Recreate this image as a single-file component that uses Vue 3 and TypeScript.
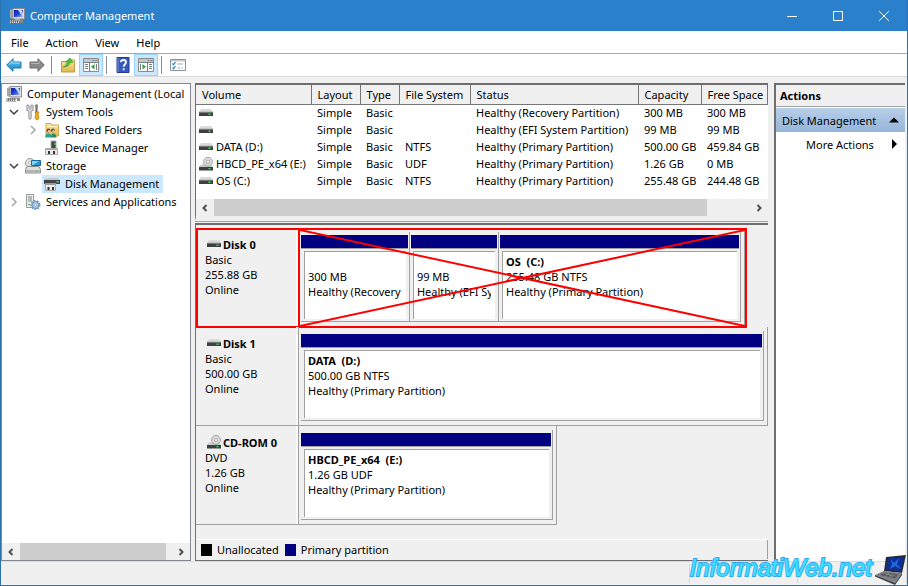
<script setup lang="ts">
type IconName = 'computer' | 'tools' | 'shared' | 'device' | 'storage' | 'disk' | 'services'

interface TreeItem {
  label: string
  icon: IconName
  depth: number
  state?: 'open' | 'closed'
  selected?: boolean
}

interface Volume {
  name: string
  cd?: boolean
  fs: string
  status: string
  capacity: string
  free: string
}

interface Partition {
  title: string
  size: string
  status: string
  weight: number
}

interface Disk {
  name: string
  kind: string
  size: string
  cd?: boolean
  marked?: boolean
  width: number
  partitions: Partition[]
}

const menus: string[] = ['File', 'Action', 'View', 'Help']

const tree: TreeItem[] = [
  { label: 'Computer Management (Local', icon: 'computer', depth: 0 },
  { label: 'System Tools', icon: 'tools', depth: 1, state: 'open' },
  { label: 'Shared Folders', icon: 'shared', depth: 2, state: 'closed' },
  { label: 'Device Manager', icon: 'device', depth: 2 },
  { label: 'Storage', icon: 'storage', depth: 1, state: 'open' },
  { label: 'Disk Management', icon: 'disk', depth: 2, selected: true },
  { label: 'Services and Applications', icon: 'services', depth: 1, state: 'closed' },
]

const columns: string[] = ['Volume', 'Layout', 'Type', 'File System', 'Status', 'Capacity', 'Free Space']

const volumes: Volume[] = [
  { name: '', fs: '', status: 'Healthy (Recovery Partition)', capacity: '300 MB', free: '300 MB' },
  { name: '', fs: '', status: 'Healthy (EFI System Partition)', capacity: '99 MB', free: '99 MB' },
  { name: 'DATA (D:)', fs: 'NTFS', status: 'Healthy (Primary Partition)', capacity: '500.00 GB', free: '459.84 GB' },
  { name: 'HBCD_PE_x64 (E:)', cd: true, fs: 'UDF', status: 'Healthy (Primary Partition)', capacity: '1.26 GB', free: '0 MB' },
  { name: 'OS (C:)', fs: 'NTFS', status: 'Healthy (Primary Partition)', capacity: '255.48 GB', free: '244.48 GB' },
]

const disks: Disk[] = [
  {
    name: 'Disk 0', kind: 'Basic', size: '255.88 GB', marked: true, width: 95,
    partitions: [
      { title: '', size: '300 MB', status: 'Healthy (Recovery Partition)', weight: 109 },
      { title: '', size: '99 MB', status: 'Healthy (EFI System Partition)', weight: 89 },
      { title: 'OS  (C:)', size: '255.48 GB NTFS', status: 'Healthy (Primary Partition)', weight: 243 },
    ],
  },
  {
    name: 'Disk 1', kind: 'Basic', size: '500.00 GB', width: 100,
    partitions: [{ title: 'DATA  (D:)', size: '500.00 GB NTFS', status: 'Healthy (Primary Partition)', weight: 1 }],
  },
  {
    name: 'CD-ROM 0', kind: 'DVD', size: '1.26 GB', cd: true, width: 55,
    partitions: [{ title: 'HBCD_PE_x64  (E:)', size: '1.26 GB UDF', status: 'Healthy (Primary Partition)', weight: 1 }],
  },
]
</script>

<template>
  <div class="window">
    <svg class="defs" aria-hidden="true">
      <linearGradient id="screen" x1="0" y1="0" x2="1" y2="1">
        <stop offset="0" stop-color="#0a1fa8" /><stop offset="0.5" stop-color="#2440d8" /><stop offset="1" stop-color="#9fb8f4" />
      </linearGradient>
      <linearGradient id="blueArrow" x1="0" y1="0" x2="0" y2="1">
        <stop offset="0" stop-color="#6cc8f0" /><stop offset="1" stop-color="#1484c8" />
      </linearGradient>
      <linearGradient id="folder" x1="0" y1="0" x2="0" y2="1">
        <stop offset="0" stop-color="#fbe9a8" /><stop offset="1" stop-color="#e3b44c" />
      </linearGradient>
      <symbol id="i-computer" viewBox="0 0 16 16">
        <path d="M1 2l3-1v10l-3-1z" fill="#a8a8a8" /><path d="M4 .500h11.500V11H4z" fill="#e4e4e4" stroke="#8c8c8c" />
        <path d="M5 2h9v7H5z" fill="url(#screen)" />
        <path d="M9 2h3.500L14 6v3z" fill="#c9d8fa" />
        <path d="M6 11h5v2H6z" fill="#b5b5b5" /><path d="M1 12h9v3.500H0z" fill="#777" />
        <path d="M1 13h9M1 14.500h9" stroke="#ddd" stroke-dasharray="1 1" /><path d="M11 12h3v3h-3z" fill="#888" />
      </symbol>
      <symbol id="i-tools" viewBox="0 0 16 16">
        <path d="M3 2v3.500l2 1 2-1V2M5 6.500V14" fill="none" stroke="#777" stroke-width="3" stroke-linecap="round" />
        <path d="M3 2v3.500l2 1 2-1V2M5 6.500V14" fill="none" stroke="#e6e6e6" stroke-width="1.400" stroke-linecap="round" />
        <path d="M11.500 1v7" stroke="#666" stroke-width="2" /><path d="M10 1l1.500-1L13 1v2h-3z" fill="#888" />
        <path d="M10 8h4l-1 2 1 4.500-2 1.500-2-1.500.7-4.500z" fill="#f0ae18" stroke="#b87908" stroke-width=".7" />
      </symbol>
      <symbol id="i-shared" viewBox="0 0 16 16">
        <path d="M2 1.500h5l1 1.500h6.500v11H2z" fill="url(#folder)" stroke="#d3a94c" />
        <path d="M3 4.500h11" stroke="#fff2bd" />
        <circle cx="4.500" cy="8.500" r="1.900" fill="#5c4a3b" /><circle cx="5" cy="9.300" r="1.200" fill="#f3c9a5" />
        <circle cx="9" cy="8.500" r="1.900" fill="#5c4a3b" /><circle cx="9.500" cy="9.300" r="1.200" fill="#f3c9a5" />
        <path d="M1 15.500q.500-4 3.500-4t3 4z" fill="#27a59c" /><path d="M7 15.500q0-4 2.500-4t3 4z" fill="#2b8c56" />
      </symbol>
      <symbol id="i-device" viewBox="0 0 16 16">
        <path d="M7 1h5v8H7z" fill="#444" stroke="#aaa" /><path d="M10 3h1.500v2H10z" fill="#3cce50" />
        <path d="M1.500 8.500h12v6h-12z" fill="#e9e9e9" stroke="#aaa" /><path d="M2 8h11v2H2z" fill="#aaa" />
        <path d="M4 11h2v3H4zM9 11h2v3H9z" fill="#333" />
      </symbol>
      <symbol id="i-storage" viewBox="0 0 16 16">
        <circle cx="5" cy="5" r="4.500" fill="#e2e5e7" stroke="#92999d" /><circle cx="5" cy="5" r="1.500" fill="#fff" stroke="#999" stroke-width=".6" />
        <path d="M6.500 2.500h9v5h-9z" fill="#2797cd" stroke="#176b98" /><path d="M7 3h7L8 7H7z" fill="#87d4f3" />
        <path d="M2 8.500h12l1.500 3v3.500H.5v-3.500z" fill="#dedede" stroke="#8c8c8c" /><path d="M1 12h14v2.500H1z" fill="#b5b5b5" />
        <path d="M11 12.500h2v1.300h-2z" fill="#35e24c" />
      </symbol>
      <symbol id="i-disk" viewBox="0 0 16 16">
        <path d="M2 2h12l2 2H0z" fill="#c8c8c8" /><path d="M0 4h16v4H0z" fill="#444" /><path d="M12.500 5h2v1.500h-2z" fill="#42e04f" />
        <path d="M1.500 8.500h10v6h-10z" fill="#ececec" stroke="#aaa" /><path d="M1 7h11v2H1z" fill="#9b9b9b" />
        <path d="M3.500 11h2v3h-2zM8 11h2v3H8z" fill="#333" />
      </symbol>
      <symbol id="i-services" viewBox="0 0 16 16">
        <path d="M1.500.500h7v13h-7z" fill="#ececec" stroke="#999" /><path d="M3 3h4M3 5h4M3 7h4" stroke="#7d8790" />
        <path d="M3 10h2v1H3z" fill="#45b857" />
        <circle cx="10.500" cy="11" r="4" fill="#9bbddb" stroke="#6b93b9" stroke-width="2" stroke-dasharray="1.600 1.200" />
        <circle cx="10.500" cy="11" r="3.300" fill="#b9d4ea" stroke="#7399bd" /><circle cx="10.500" cy="11" r="1.300" fill="#fff" stroke="#6b93b9" stroke-width=".7" />
      </symbol>
      <symbol id="i-drive" viewBox="0 0 14 14">
        <path d="M2 3h10l2 3H0z" fill="#dadada" /><path d="M0 6h14v4H0z" fill="#3c4040" /><path d="M0 5.500h14v1H0z" fill="#b0b0b0" />
        <path d="M9.500 7.500h2v1.500h-2z" fill="#2fe645" />
      </symbol>
      <symbol id="i-cd" viewBox="0 0 14 14">
        <path d="M2 7.500h10l2 2.500H0z" fill="#c9c9c9" /><circle cx="9" cy="4.800" r="4.400" fill="#e0e0e0" stroke="#999" stroke-width=".9" />
        <circle cx="9" cy="4.800" r="1.700" fill="#fff" stroke="#999" stroke-width=".9" />
        <path d="M0 10h14v3.500H0z" fill="#3c4040" /><path d="M9.500 11h2v1.300h-2z" fill="#2fe645" />
      </symbol>
    </svg>

    <header class="titlebar">
      <svg class="icon16"><use href="#i-computer" /></svg>
      <h1>Computer Management</h1>
      <button type="button" aria-label="Minimize"><svg viewBox="0 0 12 12"><path d="M1 6.500h10" /></svg></button>
      <button type="button" aria-label="Maximize"><svg viewBox="0 0 12 12"><path d="M1.500 1.500h9v9h-9z" /></svg></button>
      <button type="button" aria-label="Close"><svg viewBox="0 0 12 12"><path d="M1 1l10 10M11 1L1 11" /></svg></button>
    </header>

    <nav class="menubar">
      <button v-for="m in menus" :key="m" type="button">{{ m }}</button>
    </nav>

    <div class="toolbar">
      <button type="button" aria-label="Back">
        <svg viewBox="0 0 16 16"><path d="M.700 8L7 1.700V5h8v6H7v3.300z" fill="url(#blueArrow)" stroke="#1a78ae" /><path d="M3 7.500L6 4.500V6h8" fill="none" stroke="#a8e2fa" /></svg>
      </button>
      <button type="button" aria-label="Forward">
        <svg viewBox="0 0 16 16"><path d="M15.300 8L9 1.700V5H1v6h8v3.300z" fill="#8a8a8a" stroke="#6a6a6a" /><path d="M2 6.500h8v-2" fill="none" stroke="#b5b5b5" /></svg>
      </button>
      <i class="sep"></i>
      <button type="button" aria-label="Up one level">
        <svg viewBox="0 0 16 16"><path d="M1.500 4.500h5L8 3h6.500v12h-13z" fill="url(#folder)" stroke="#c09a48" /><path d="M3 10q3 0 4.500-5L5.500 5 10 1l3 4.500-2.500-.3Q9 10 3 10z" fill="#4cc33c" stroke="#2c8e25" stroke-width=".6" /></svg>
      </button>
      <button type="button" class="on" aria-label="Show or hide console tree">
        <svg viewBox="0 0 16 16"><path d="M.500 1.500h15v13H.500z" fill="#fff" stroke="#858b90" /><path d="M1 2h14v3H1z" fill="#c3c8cb" /><path d="M1 5.500h14M6.500 6v8M12.500 3.500h2M9.500 3.500h2" stroke="#777e84" /><path d="M2 7.500h3M2 9.500h3M2 11.500h3M13.500 7v6" stroke="#777e84" /><path d="M11.500 7v5.500L8 9.700z" fill="#28a43a" /></svg>
      </button>
      <i class="sep"></i>
      <button type="button" aria-label="Help">
        <svg viewBox="0 0 16 16"><path d="M2 .500h12v15H2z" fill="#3558bb" stroke="#1d3a91" /><path d="M3 1v14" stroke="#7c98e0" /><path d="M5.800 5.200Q6 3 8.500 3t2.500 2.300c0 2-2.300 2-2.300 4.500M8.700 11.300v2" fill="none" stroke="#fff" stroke-width="1.800" /></svg>
      </button>
      <button type="button" class="on" aria-label="Show or hide action pane">
        <svg viewBox="0 0 16 16"><path d="M.500 1.500h15v13H.500z" fill="#fff" stroke="#858b90" /><path d="M1 2h14v3H1z" fill="#c3c8cb" /><path d="M1 5.500h14M9.500 6v8M12.500 3.500h2M9.500 3.500h2" stroke="#777e84" /><path d="M11 7.500h3M11 9.500h3M11 11.500h3M2.500 7v6" stroke="#777e84" /><path d="M4.500 7v5.500L8 9.700z" fill="#28a43a" /></svg>
      </button>
      <i class="sep"></i>
      <button type="button" aria-label="Properties">
        <svg viewBox="0 0 16 16"><path d="M.500 2.500h15v11H.500z" fill="#fff" stroke="#8b9299" /><path d="M1 3h14v1.500H1z" fill="#c6ccd0" /><path d="M2.500 6.500l1 1.200L5.500 5M2.500 10.500l1 1.200L5.500 9" fill="none" stroke="#2b80cc" stroke-width="1.200" /><path d="M7.500 7H13M7.500 11H10M11.500 11H13" stroke="#9aa" /></svg>
      </button>
    </div>

    <main class="body">
      <aside class="pane tree-pane">
        <ul class="tree">
          <li v-for="t in tree" :key="t.label" :class="'depth' + t.depth">
            <button v-if="t.depth" type="button" class="toggle" :class="t.state" :aria-label="'Toggle ' + t.label" :disabled="!t.state">
              <svg v-if="t.state === 'open'" viewBox="0 0 10 10"><path d="M1 3l4 4 4-4" /></svg>
              <svg v-else-if="t.state" viewBox="0 0 10 10"><path d="M3 1l4 4-4 4" /></svg>
            </button>
            <span class="node" :class="{ selected: t.selected }">
              <svg class="icon16"><use :href="'#i-' + t.icon" /></svg>
              <span>{{ t.label }}</span>
            </span>
          </li>
        </ul>
        <div class="hscroll">
          <button type="button" aria-label="Scroll left"><svg viewBox="0 0 8 8"><path d="M5.500 1l-3 3 3 3" /></svg></button>
          <div class="track"><div class="thumb tree-thumb"></div></div>
          <button type="button" aria-label="Scroll right"><svg viewBox="0 0 8 8"><path d="M2.500 1l3 3-3 3" /></svg></button>
        </div>
      </aside>

      <section class="center">
        <div class="volumes">
          <table>
            <colgroup>
              <col class="c-volume" /><col class="c-layout" /><col class="c-type" /><col class="c-fs" />
              <col class="c-status" /><col class="c-capacity" /><col />
            </colgroup>
            <thead>
              <tr><th v-for="c in columns" :key="c" scope="col">{{ c }}</th></tr>
            </thead>
            <tbody>
              <tr v-for="(v, i) in volumes" :key="i">
                <td><div class="vol"><svg><use :href="v.cd ? '#i-cd' : '#i-drive'" /></svg>{{ v.name }}</div></td>
                <td>Simple</td>
                <td>Basic</td>
                <td>{{ v.fs }}</td>
                <td>{{ v.status }}</td>
                <td>{{ v.capacity }}</td>
                <td>{{ v.free }}</td>
              </tr>
            </tbody>
          </table>
          <div class="hscroll">
            <button type="button" aria-label="Scroll left"><svg viewBox="0 0 8 8"><path d="M5.500 1l-3 3 3 3" /></svg></button>
            <div class="track"><div class="thumb volume-thumb"></div></div>
            <button type="button" aria-label="Scroll right"><svg viewBox="0 0 8 8"><path d="M2.500 1l3 3-3 3" /></svg></button>
          </div>
        </div>

        <div class="disks">
          <article v-for="d in disks" :key="d.name" class="disk">
            <div class="label">
              <h2><svg><use :href="d.cd ? '#i-cd' : '#i-drive'" /></svg>{{ d.name }}</h2>
              <p>{{ d.kind }}</p>
              <p>{{ d.size }}</p>
              <p>Online</p>
            </div>
            <div class="area">
              <div class="graph" :style="{ width: d.width + '%' }">
                <div v-for="(p, i) in d.partitions" :key="i" class="partition" :style="{ flexGrow: p.weight }">
                  <div class="bar"></div>
                  <div class="box">
                    <h3>{{ p.title }}</h3>
                    <p>{{ p.size }}</p>
                    <p>{{ p.status }}</p>
                  </div>
                </div>
              </div>
            </div>
            <div v-if="d.marked" class="mark">
              <div class="mark-label"></div>
              <svg class="mark-cross" viewBox="0 0 100 100" preserveAspectRatio="none"><path d="M0 0L100 100M100 0L0 100" /></svg>
            </div>
          </article>
          <div class="legend">
            <i class="swatch black"></i><span>Unallocated</span>
            <i class="swatch navy"></i><span>Primary partition</span>
          </div>
        </div>
      </section>

      <aside class="pane actions">
        <h2>Actions</h2>
        <button type="button" class="group"><span>Disk Management</span><svg viewBox="0 0 10 10"><path d="M0 7.500L5 2.500l5 5z" /></svg></button>
        <button type="button" class="more"><span>More Actions</span><svg viewBox="0 0 10 10"><path d="M3 0l5 5-5 5z" /></svg></button>
      </aside>
    </main>

    <footer class="status">
      <span></span><span></span><span></span>
      <div class="brand">
        <strong>InformatiWeb.net</strong>
        <svg viewBox="0 0 32 30">
          <path d="M11 2l20-2-4 18-18-2z" fill="#252a36" /><path d="M13 3.500L29 2l-3.500 14L11 14.500z" fill="#0c2f9c" />
          <path d="M16 4l3 4 5-5-2 6 4 5-6-3-5 3 2-5z" fill="#2268d8" />
          <path d="M9 16l18 2-7 10L0 20z" fill="#7d8085" /><path d="M10 17.500l13 2-3 4L5 19.800z" fill="#505358" />
          <path d="M8 18.500l13 2.500M10 17.500l9 5M14 18l-4 3.500M18 19l-4 3.500" stroke="#92969c" stroke-width=".6" />
          <path d="M0 20l20 8v2L0 21.500zM20 28l7-10v2l-7 10z" fill="#393c40" />
        </svg>
      </div>
    </footer>
  </div>
</template>

<style>
html, body, #app { height: 100%; }
body { margin: 0; overflow: hidden; }
</style>

<style scoped>
* { box-sizing: border-box; }
.window {
  display: flex; flex-direction: column; height: 100%;
  border: solid #2b72ac; border-width: 0 1px 1px;
  background: #f0f0f0; color: #000;
  font: 11px/15px "Noto Sans", "Open Sans", sans-serif;
  white-space: nowrap;
}
.defs { position: absolute; width: 0; height: 0; }
h1, h2, h3, p, ul { margin: 0; padding: 0; font-size: inherit; font-weight: inherit; }
button { font: inherit; color: inherit; background: none; border: 0; padding: 0; }
svg { display: block; flex: none; }
.icon16 { width: 16px; height: 16px; }

.titlebar { display: flex; align-items: center; height: 31px; padding-left: 8px; background: #2a80cb; color: #fff; flex: none; }
.titlebar h1 { flex: 1; padding-left: 5px; }
.titlebar button { display: grid; place-items: center; width: 46px; height: 30px; }
.titlebar button svg { width: 12px; height: 12px; fill: none; stroke: #fff; }

.menubar { display: flex; height: 23px; padding-left: 10px; gap: 17px; background: #fff; border-bottom: 1px solid #a9a9a9; flex: none; }
.toolbar { display: flex; align-items: center; height: 23px; padding-left: 1px; background: #fff; border-bottom: 1px solid #d9d9d9; flex: none; }
.toolbar button { display: grid; place-items: center; width: 23px; height: 22px; }
.toolbar button.on { background: #cce8ff; border: 1px solid #99d1ff; width: 24px; }
.toolbar svg { width: 16px; height: 16px; }
.sep { width: 1px; height: 18px; margin: 0 4px 0 3px; background: #8d8d8d; }

.body { flex: 1; display: flex; min-height: 0; padding: 6px 2px 0 0; border-bottom: 1px solid #dcdcdc; }
.pane { background: #fff; border: 1px solid #828790; }
.tree-pane { flex: none; width: 190px; display: flex; flex-direction: column; overflow: hidden; }
.tree { flex: 1; list-style: none; padding-top: 1px; }
.tree li { display: flex; height: 18px; }
.tree .depth0 { padding-left: 2px; }
.tree .depth1 { padding-left: 3px; }
.tree .depth2 { padding-left: 22px; }
.toggle { display: grid; place-items: center; width: 18px; height: 18px; }
.toggle svg { width: 10px; height: 10px; fill: none; stroke: #a6a6a6; stroke-width: 1.5; }
.toggle.open svg { stroke: #404040; }
.node { display: flex; align-items: center; gap: 5px; padding: 0 4px 0 2px; line-height: 18px; }
.selected { background: #cce8ff; }

.hscroll { display: flex; height: 17px; background: #f0f0f0; flex: none; }
.hscroll button { display: grid; place-items: center; width: 18px; height: 17px; }
.hscroll button svg { width: 8px; height: 8px; fill: none; stroke: #505050; stroke-width: 2; }
.track { flex: 1; display: flex; }
.thumb { background: #cdcdcd; }
.tree-thumb { width: 96%; }
.volume-thumb { width: 92%; }

.center { flex: 1; min-width: 0; display: flex; flex-direction: column; gap: 2px; margin: 0 6px 0 4px; }
.volumes { height: 138px; display: flex; flex-direction: column; background: #fff; border: solid #6e6e6e; border-width: 2px 0 0 1px; border-bottom: 5px solid #f0f0f0; box-shadow: 0 1px #a0a0a0; flex: none; }
table { border-collapse: collapse; table-layout: fixed; width: 100%; margin-bottom: auto; }
.c-volume { width: 115px; }
.c-layout { width: 49px; }
.c-type { width: 39px; }
.c-fs { width: 71px; }
.c-status { width: 168px; }
.c-capacity { width: 63px; }
th { height: 19px; padding: 0 0 0 6px; text-align: left; font-weight: 400; background: #f0f0f0; border: solid #777; border-width: 0 1px 1px 0; }
td { height: 17px; padding: 0 0 0 6px; }
td:first-child { padding-left: 3px; }
.vol { display: flex; align-items: center; gap: 3px; }
.vol svg { width: 14px; height: 14px; }

.disks { flex: 1; min-height: 0; display: flex; flex-direction: column; border: solid #6e6e6e; border-width: 2px 0 1px 1px; padding-top: 3px; }
.disk { position: relative; display: flex; height: 99px; flex: none; }
.label { width: 103px; padding: 8px 0 0 9px; border: solid #a0a0a0; border-width: 0 1px 1px 0; box-shadow: inset -2px 0 #fafafa; flex: none; }
.label h2, .box h3 { font-weight: 700; }
.label h2 { display: flex; align-items: center; gap: 2px; padding-left: 2px; height: 16px; }
.label h2 svg { width: 14px; height: 14px; }
.area { flex: 1; min-width: 0; display: flex; }
.graph { display: flex; height: 99px; padding: 4px 3px 4px 2px; border: solid #a0a0a0; border-width: 0 1px 1px 0; }
.partition { flex: 1 1 0; min-width: 0; padding-top: 3px; border: solid #a0a0a0; border-width: 0 1px 1px 0; }
.bar { height: 14px; margin: 0 1px 0 0; background: #000080; border-bottom: 1px solid #a0a0a0; }
.box { height: 68px; margin: 2px 3px 0 3px; padding: 1px 4px 0 3px; background: #fff; border: solid #a0a0a0; border-width: 1px 0 0 1px; }
.box p { overflow: hidden; }
.partition + .partition .bar { margin-left: 1px; }
.box h3 { height: 16px; line-height: 18px; white-space: pre; }
.mark { position: absolute; inset: 0 21px -1px 0; display: flex; border: 2px solid #f00; }
.mark-label { width: 102px; border-right: 2px solid #f00; flex: none; }
.mark-cross { flex: 1; min-width: 0; height: 100%; fill: none; stroke: #f00; stroke-width: 2; }
.mark-cross path { vector-effect: non-scaling-stroke; }

.legend { display: flex; align-items: center; height: 19px; margin: auto 0 1px; padding-left: 5px; border: solid #a0a0a0; border-width: 0 1px 0 0; box-shadow: 0 -1px #fff; }
.swatch { width: 11px; height: 12px; }
.legend span { padding: 0 6px 0 5px; }
.black { background: #000; }
.navy { background: #000080; }

.actions { flex: none; width: 131px; border-width: 2px 0 0 2px; border-color: #6e6e6e; }
.actions h2 { height: 22px; padding-left: 4px; line-height: 22px; font-weight: 700; background: #f0f0f0; border-bottom: 1px solid #a0a0a0; }
.actions button { display: flex; align-items: center; justify-content: space-between; width: 100%; height: 24px; padding: 0 6px; }
.actions button svg { width: 10px; height: 10px; }
.group { margin-top: 1px; background: linear-gradient(#b8cfe8, #94b4d9); }
.actions .more { padding-left: 30px; }

.status { position: relative; display: flex; height: 23px; flex: none; }
.status > span { flex: 1; margin: 2px 0; border-right: 1px solid #d7d7d7; }
.status > span:first-child { flex: none; width: 76%; }
.brand { position: absolute; right: 0; bottom: 0; display: flex; align-items: flex-end; gap: 3px; }
.brand strong { font: italic 400 24px/34px "Liberation Sans", Arial, sans-serif; color: #3fe0ff; -webkit-text-stroke: 2px #2fa8f6; paint-order: stroke fill; }
.brand svg { width: 32px; height: 30px; }
</style>
